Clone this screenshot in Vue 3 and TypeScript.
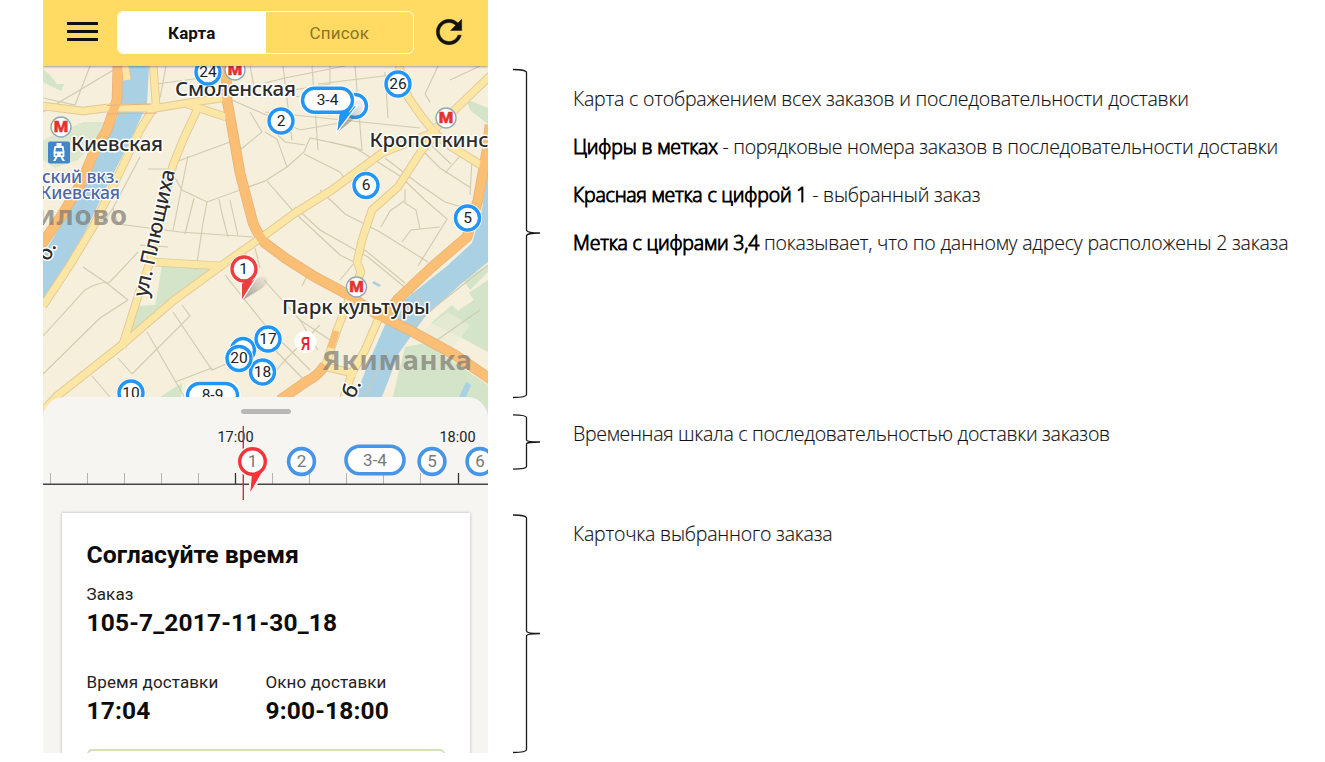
<script setup lang="ts">
interface Pin { x: number; y: number; label: string; wide?: boolean }

const backPins: Pin[] = [
  { x: 355, y: 106, label: '' },
  { x: 243, y: 350, label: '' },
]
const pins: Pin[] = [
  { x: 208, y: 72, label: '24' },
  { x: 398, y: 84, label: '26' },
  { x: 281, y: 121, label: '2' },
  { x: 366, y: 185.5, label: '6' },
  { x: 467.5, y: 218, label: '5' },
  { x: 268, y: 339, label: '17' },
  { x: 262.5, y: 372, label: '18' },
  { x: 239, y: 358.5, label: '20' },
  { x: 131, y: 393, label: '10' },
  { x: 212.5, y: 395.5, label: '8-9', wide: true },
]
const metros = [[235, 70], [446, 118], [61, 127], [356.5, 287]]

const lanes = [
  'M43 112L120 66', 'M43 98L75 105L90 66', 'M160 98L166 66', 'M157 84L223 75', 'M250 66L256 96L330 84L330 66',
  'M232 100L300 130L345 122', 'M250 112L262 132L240 150', 'M265 83L285 78L345 66', 'M283 66L292 140', 'M312 66L318 150', 'M318 84L400 74',
  'M355 66L362 150L330 142', 'M265 112L420 128', 'M292 96L330 100', 'M385 72L388 118', 'M425 94L438 66', 'M425 94L430 102', 'M450 80L480 66',
  'M265 132L277 139L287 167L265 181L240 190', 'M287 167L304 152L310 138L357 148', 'M304 154L340 172L347 182', 'M276 133L285 142L305 145',
  'M267 181L295 213L340 255L358 264', 'M295 207L320 230L368 257L430 308', 'M320 190L345 214L380 232L428 262', 'M357 149L400 176L425 200L447 219L418 266',
  'M405 189V203L416 210L420 229', 'M404 201L390 211L381 227', 'M402 242L411 230L440 227', 'M385 158L420 185L445 202L472 210', 'M418 146L440 168L471 188', 'M430 144L451 164', 'M445 173L460 156', 'M472 160L470 195',
  'M188 156L173 230', 'M173 163L230 142', 'M148 169H170L182 190L207 202L265 181', 'M207 202L203 223L196 270', 'M194 198L185 234', 'M219 199L222 214L228 237', 'M230 200L238 236',
  'M140 157L113 208L118 224L180 232L253 237', 'M78 225L105 220L113 208', 'M140 245L168 247', 'M83 267L108 284L128 300', 'M43 336L85 290Q95 283 110 282L138 252', 'M128 300L100 318L43 374',
  'M147 332L185 398', 'M173 312L212 370L240 358', 'M182 305L190 316L132 374', 'M225 275L265 325L310 370', 'M118 358L132 374', 'M92 376L110 397', 'M175 382L212 368',
  'M264 280L300 320L330 340', 'M310 270L302 286', 'M300 320L318 350', 'M275 350L308 384', 'M264 385L285 360L320 325', 'M255 248L260 268', 'M340 280L365 250L405 283', 'M480 310L430 345',
  'M412 325L488 265', 'M365 397L388 350',
]
const yellowRoads = [
  'M153 62L156 104L140 130L115 182L93 227L70 265L43 306', 'M43 106L83 111L107 108L157 108L187 103L223 98', 'M187 104L226 117',
  'M197 110L183 140L173 165L150 262L140 290L122 347', 'M153 262L222 266', 'M432 133L382 153L332 190L295 213L265 235L225 263L173 301L123 344L57 396L40 414',
  'M398 62L408 97L422 117L436 134L422 150L398 187L372 210L362 240L357 262L361 272L350 297L337 330L325 367', 'M492 74L465 100L436 128', 'M430 130L452 147L484 167', 'M378 320L365 350L352 373L343 400', 'M327 367L356 374', 'M127 80L125 66',
]
const orangeRoads = [
  'M118 60L117 100L107 130L95 150L80 185L62 215L38 250', 'M226 66L227 100L233 133L240 173L253 223Q258 235 265 243L285 258L315 277L345 293L375 313L415 333L455 355L492 380',
  'M490 125L487 150L478 200L467 237L432 267L398 299L383 318', 'M325 365Q318 376 307 381L280 400',
]

const minorTicks = [50.5, 87.5, 124.5, 161.5, 198.5, 272.5, 309.5, 346.5, 383.5, 420.5]
const stops: Pin[] = [
  { x: 301.5, y: 461.5, label: '2' },
  { x: 375, y: 460, label: '3-4', wide: true },
  { x: 432, y: 461.5, label: '5' },
  { x: 480, y: 461.5, label: '6' },
]
</script>

<template>
  <main class="page">
    <section class="phone">
      <header class="bar">
        <div class="burger"><i></i><i></i><i></i></div>
        <div class="tabs">
          <div class="tab on">Карта</div>
          <div class="tab">Список</div>
        </div>
        <svg class="refresh" viewBox="0 0 24 24"><path d="M17.65 6.35C16.2 4.9 14.21 4 12 4c-4.42 0-7.99 3.58-7.99 8s3.57 8 7.99 8c3.73 0 6.84-2.55 7.73-6h-2.08c-.82 2.33-3.04 4-5.65 4-3.31 0-6-2.69-6-6s2.69-6 6-6c1.66 0 3.14.69 4.22 1.78L13 11h7V4l-2.35 2.35z" /></svg>
      </header>

      <svg class="map" viewBox="43 66 445 364" width="445" height="364">
        <rect x="43" y="66" width="445" height="364" fill="#f5efdb" />
        <g fill="#d3e4c8">
          <path d="M43 69L50 75L57 84L64 84L61 91L43 82Z" />
          <path d="M83 122H107L97 140L78 160L55 168L43 160V140Z" opacity=".75" />
          <path d="M162 264L217 269L128 341L137 306L155 305L158 290Z" />
          <path d="M466 99L488 108V124L470 110Z" />
          <path d="M431 323L452 305L458 311L474 300L469 293L488 280V352L462 338Z" />
          <path d="M392 400L405 347L425 343L488 385V430H385Z" />
          <path d="M160 397L182 383L181 397Z" />
          <path d="M463 280L488 265V272L470 290Z" />
        </g>
        <path d="M420 332L448 312L470 325L452 350Z" fill="#ebecd5" opacity=".7" />
        <g fill="#a9d1e3">
          <path d="M125 66H149L147 104L134 133L108 184L88 226L66 268L43 303V255L58 230L80 194L101 150L117 118Z" />
          <path d="M488 168V262L462 283L424 318L399 353L380 402H353L371 357L385 325L398 305L447 266L472 243L482 210Z" />
          <path d="M374 281l7 4-2 2-7-4Z" />
          <path d="M466 382l5 3-5 12h-7Z" />
        </g>
        <g fill="none" stroke="#d0cbb0" stroke-width="1.1">
          <path v-for="d in lanes" :key="d" :d="d" />
        </g>
        <g fill="none" stroke-linejoin="round">
          <path v-for="d in yellowRoads" :key="d" :d="d" stroke="#e3c798" stroke-width="8.6" />
          <path v-for="d in orangeRoads" :key="d" :d="d" stroke="#e8b27c" stroke-width="10.6" />
          <path v-for="d in yellowRoads" :key="d + 'f'" :d="d" stroke="#fbe6a4" stroke-width="6.8" />
          <path v-for="d in orangeRoads" :key="d + 'f'" :d="d" stroke="#fabf74" stroke-width="9" />
        </g>
        <path d="M336 331L331 348" stroke="#fabf74" stroke-width="7" />
        <path d="M107 105.500L150 104M107 114L157 113" stroke="#e8b27c" stroke-width="1" />

        <g class="district">
          <text x="322" y="370" textLength="150">Якиманка</text>
          <text x="37" y="224.500" textLength="90">илово</text>
        </g>
        <g class="station">
          <text x="42" y="183" textLength="77">ский вкз.</text>
          <text x="40" y="199" textLength="80">Киевская</text>
        </g>
        <g class="place">
          <text x="175" y="96" textLength="121">Смоленская</text>
          <text x="71" y="151" textLength="92">Киевская</text>
          <text x="369.500" y="147" textLength="119">Кропоткинс</text>
          <text x="282" y="314" textLength="148">Парк культуры</text>
          <text transform="translate(147 298) rotate(-77.5)" textLength="130">ул. Плющиха</text>
          <text transform="translate(49 262) rotate(-65)">о.</text>
          <text transform="translate(349 410) rotate(-65)">аб.</text>
        </g>

        <g v-for="[x, y] in metros" :key="x" :transform="`translate(${x} ${y})`">
          <circle r="10" fill="#fff" stroke="#8faab5" stroke-width="1.4" />
          <text class="metro" y="4.600" textLength="14.5" lengthAdjust="spacingAndGlyphs">М</text>
        </g>

        <rect x="48" y="141.500" width="22" height="22" rx="2" fill="#4087ca" />
        <g fill="#fff">
          <path d="M56.500 143h5v3h-5zM54.500 146h9q1.500 6 .8 11h-10.600q-.7-5 .8-11z" />
          <path d="M55.500 157l-2.500 4h2.500l2-4zM62.500 157l2.500 4h-2.500l-2-4z" />
        </g>
        <path d="M56 148h6l.7 3.500h-7.400z" fill="#4087ca" />
        <circle cx="56.200" cy="154.500" r="1" fill="#4087ca" /><circle cx="61.800" cy="154.500" r="1" fill="#4087ca" />

        <defs>
          <linearGradient id="fade" x1="0" y1="1" x2="1" y2="0">
            <stop offset="0" stop-color="#666" stop-opacity=".65" />
            <stop offset="1" stop-color="#777" stop-opacity=".05" />
          </linearGradient>
        </defs>

        <g v-for="p in backPins" :key="p.x" :transform="`translate(${p.x} ${p.y})`">
          <circle r="14" fill="#fff" /><circle r="11.500" fill="#fff" stroke="#2196f8" stroke-width="3.400" />
        </g>
        <path d="M241 301L254 281Q262 274 267 278Q269 283 261 289Z" fill="url(#fade)" />
        <path d="M339 131L350 110Q357 97 362 101Q367 106 359 115Z" fill="url(#fade)" />

        <path d="M340 112L337.500 130.500L356 106Z" fill="#2196f8" stroke="#fff" stroke-width="2.400" paint-order="stroke" />
        <rect x="299.500" y="85.500" width="55.500" height="29.500" rx="14" fill="#fff" />
        <path d="M340 112L337.500 130.500L354 104Z" fill="#2196f8" />
        <rect x="302.500" y="88.200" width="50" height="24" rx="12" fill="#fff" stroke="#2196f8" stroke-width="3.400" />
        <text class="num" x="327.500" y="105">3-4</text>

        <g v-for="p in pins" :key="p.label" :transform="`translate(${p.x} ${p.y})`">
          <template v-if="p.wide">
            <rect x="-28" y="-14.500" width="56" height="29" rx="13" fill="#fff" />
            <rect x="-25" y="-12" width="50" height="24" rx="12" fill="#fff" stroke="#2196f8" stroke-width="3.400" />
          </template>
          <template v-else>
            <circle r="14.500" fill="#fff" /><circle r="12" fill="#fff" stroke="#2196f8" stroke-width="3.400" />
          </template>
          <text class="num" y="4.600">{{ p.label }}</text>
        </g>

        <path d="M242 280L242 299L256 277Z" fill="#ee3f40" stroke="#fff" stroke-width="2.600" paint-order="stroke" />
        <circle cx="244" cy="269" r="14.500" fill="#fff" />
        <path d="M243.500 281L242 299L257.500 270Z" fill="#ee3f40" />
        <circle cx="244" cy="269" r="12" fill="#fff" stroke="#ee3f40" stroke-width="3.400" />
        <text class="num" x="243.500" y="273.500">1</text>

        <circle cx="305.500" cy="342" r="11" fill="#fff" />
        <text class="ya" x="305.500" y="349.500" textLength="9" lengthAdjust="spacingAndGlyphs">Я</text>
      </svg>

      <div class="sheet">
        <div class="grip"></div>
        <svg class="timeline" viewBox="43 417 445 96" width="445" height="96">
          <text class="hour" x="235.500" y="442">17:00</text>
          <text class="hour" x="457.500" y="442">18:00</text>
          <path v-for="t in minorTicks" :key="t" :d="`M${t} 473V484`" stroke="#b4b4b2" />
          <path d="M235.500 473V484M458.500 473V484" stroke="#333" stroke-width="1.300" />
          <path d="M43 484.300H488" stroke="#444" stroke-width="1.500" />
          <path d="M243.300 426V500" stroke="#c2272d" stroke-width="1.300" />
          <g v-for="s in stops" :key="s.label" :transform="`translate(${s.x} ${s.y})`">
            <rect v-if="s.wide" x="-29" y="-13.800" width="58" height="27.600" rx="13.800" fill="#fff" stroke="#4795e6" stroke-width="3.600" />
            <circle v-else r="12.900" fill="#fff" stroke="#4795e6" stroke-width="3.600" />
            <text class="stop" :y="s.wide ? 6.3 : 5.8">{{ s.label }}</text>
          </g>
          <path d="M253 474L250.500 491.500L265 466Z" fill="#fb3239" stroke="#f6f5f1" stroke-width="5" paint-order="stroke" />
          <circle cx="252.500" cy="461.500" r="15.800" fill="#f6f5f1" />
          <path d="M252 473L250.500 491.500L266.500 464Z" fill="#fb3239" />
          <circle cx="252.500" cy="461.500" r="12.800" fill="#fff" stroke="#fb3239" stroke-width="3.400" />
          <text class="stop" x="252.500" y="467.300">1</text>
        </svg>

        <article class="card">
          <h1>Согласуйте время</h1>
          <div class="label order">Заказ</div>
          <div class="value id">105-7_2017-11-30_18</div>
          <div class="cols">
            <div><div class="label">Время доставки</div><div class="value">17:04</div></div>
            <div><div class="label">Окно доставки</div><div class="value">9:00-18:00</div></div>
          </div>
          <div class="action"></div>
        </article>
      </div>
    </section>

    <section class="notes">
      <div class="row r1">
        <svg width="28" height="331" viewBox="0 0 28 331"><path d="M0 1.500Q13.500 1.700 13.500 4.500V162Q13.500 165 27 165Q13.500 165 13.500 168V326.500Q13.500 329.300 0 329.500" /></svg>
        <div class="texts">
          <p>Карта с отображением всех заказов и последовательности доставки</p>
          <p class="tight"><b>Цифры в метках</b> - порядковые номера заказов в последовательности доставки</p>
          <p><b>Красная метка с цифрой 1</b> - выбранный заказ</p>
          <p><b>Метка с цифрами 3,4</b> показывает, что по данному адресу расположены 2 заказа</p>
        </div>
      </div>
      <div class="row r2">
        <svg width="28" height="57" viewBox="0 0 28 57"><path d="M0 .8Q13.500 1 13.500 3.500V26Q13.500 28 27 28Q13.500 28 13.500 30V52.500Q13.500 55 0 55.200" /></svg>
        <div class="texts"><p class="tight">Временная шкала с последовательностью доставки заказов</p></div>
      </div>
      <div class="row r3">
        <svg width="28" height="240" viewBox="0 0 28 240"><path d="M0 1Q13.500 1.200 13.500 4V117Q13.500 119.500 27 119.500Q13.500 119.500 13.500 122V235.500Q13.500 238.300 0 238.500" /></svg>
        <div class="texts"><p>Карточка выбранного заказа</p></div>
      </div>
    </section>
  </main>
</template>

<style>
body { background: #fff; }
</style>

<style scoped>
.page { display: flex; width: 1325px; height: 762px; overflow: hidden; background: #fff; box-sizing: border-box; padding-left: 43px; }
.phone { width: 445px; height: 753px; overflow: hidden; flex: none; font-family: Roboto, "Liberation Sans", sans-serif; display: flex; flex-direction: column; color: #0c0c0c; }
.bar { height: 66px; flex: none; background: #ffdb63; display: flex; align-items: flex-start; box-shadow: 0 1px 2px rgba(0, 0, 0, .35); z-index: 1; }
.burger { width: 31px; margin: 22px 19px 0 24px; display: flex; flex-direction: column; gap: 5px; }
.burger i { height: 3px; background: #111; }
.tabs { display: flex; width: 297px; height: 43px; margin-top: 11px; box-sizing: border-box; border: 1.5px solid #fffbe6; border-radius: 6px; overflow: hidden; }
.tab { flex: 1; line-height: 42px; text-align: center; font-size: 17px; color: #8b7422; letter-spacing: .2px; }
.tab.on { background: #fff; color: #111; font-weight: 700; letter-spacing: .1px; }
.refresh { width: 38px; height: 38px; margin: 13px 0 0 16px; fill: #111; stroke: #111; stroke-width: .3px; }
.map { flex: none; display: block; }
.map text { font-family: "Noto Sans", sans-serif; }
.place text { font-size: 20.5px; font-weight: 500; fill: #2c2b2c; stroke: #fff; stroke-width: 3px; paint-order: stroke; stroke-linejoin: round; }
.station text { font-size: 17.5px; font-weight: 500; fill: #4e65a6; stroke: #fff; stroke-width: 2.5px; paint-order: stroke; stroke-linejoin: round; }
.district text { font-size: 27.5px; font-weight: 700; fill: #77736e; fill-opacity: .68; }
.map .metro { font: 900 14px Roboto, sans-serif; fill: #e4322f; text-anchor: middle; stroke: #e4322f; stroke-width: .4px; }
.map .num { font: 15.5px Roboto, sans-serif; fill: #222; text-anchor: middle; }
.map .ya { font: 700 19px "Liberation Sans", sans-serif; fill: #ee1c25; text-anchor: middle; }
.sheet { flex: none; height: 356px; margin-top: -33px; background: #f6f5f1; border-radius: 21px 21px 0 0; z-index: 1; display: flex; flex-direction: column; align-items: center; overflow: hidden; }
.grip { width: 50px; height: 5px; margin: 12px 0 3px; border-radius: 3px; background: #b8b7b5; flex: none; }
.timeline { flex: none; display: block; }
.hour { font-size: 14.5px; fill: #222; text-anchor: middle; }
.stop { font-size: 17px; fill: #777; text-anchor: middle; }
.card { width: 408px; height: 300px; flex: none; box-sizing: border-box; padding: 27px 24px 0 25px; background: #fff; box-shadow: 0 0 3px rgba(0, 0, 0, .28); }
h1 { margin: 0; font-size: 24.8px; line-height: 30px; font-weight: 700; white-space: nowrap; }
.label { font-size: 17px; line-height: 22px; color: #222; white-space: nowrap; letter-spacing: .12px; }
.order { margin-top: 13px; }
.value { font-size: 24.5px; line-height: 30px; font-weight: 700; margin-top: 3px; white-space: nowrap; letter-spacing: .17px; }
.cols { display: grid; grid-template-columns: 179px 1fr; margin-top: 33px; }
.action { height: 50px; margin: 23px 1px 0 0; border: 2px solid #d3e1b6; border-radius: 5px; }
.notes { margin-left: 25px; display: flex; flex-direction: column; flex: 1; }
.row { display: flex; }
.row svg { fill: none; stroke: #1a1a1a; stroke-width: 1.3; flex: none; }
.r1 { margin-top: 68px; height: 346px; }
.r2 { height: 100px; }
.texts { margin-left: 32px; padding-top: 5px; display: flex; flex-direction: column; gap: 18px; }
.r1 .texts { padding-top: 16px; }
p { margin: 0; font: 300 19.5px/30px "Open Sans", "Noto Sans", sans-serif; color: #111; white-space: nowrap; letter-spacing: -.2px; -webkit-text-stroke: .15px #111; }
.tight { letter-spacing: -.29px; }
b { font-weight: 300; color: #000; letter-spacing: -.18px; -webkit-text-stroke: .9px #000; }
</style>
